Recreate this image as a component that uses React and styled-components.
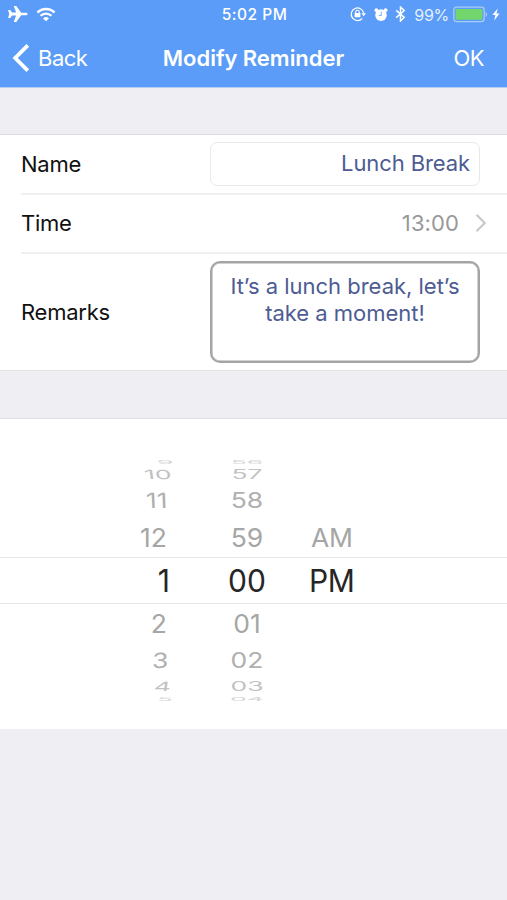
import React from 'react';
import styled, { createGlobalStyle } from 'styled-components';

const GlobalStyle = createGlobalStyle`
  * {
    box-sizing: border-box;
  }

  body {
    margin: 0;
    background: #efeef3;
    font-family: Inter, 'Liberation Sans', sans-serif;
    color: #111;
  }
`;

const Screen = styled.div`
  display: flex;
  flex-direction: column;
  width: 507px;
  height: 900px;
  overflow: hidden;
  background: #efeef3;
`;

const Header = styled.header`
  height: 88px;
  background: #5a9cf7;
  border-bottom: 1px solid #b5cdf2;
  color: #fff;
`;

const StatusBar = styled.div`
  display: grid;
  grid-template-columns: 1fr auto 1fr;
  align-items: center;
  height: 28px;
  padding: 0 7px;
`;

const StatusGroup = styled.div`
  display: flex;
  align-items: center;
  justify-content: ${({ $end }) => ($end ? 'flex-end' : 'flex-start')};
`;

const Clock = styled.span`
  padding: 1px 0 0 2px;
  font-size: 15.5px;
  font-weight: 500;
  letter-spacing: 0.5px;
`;

const Percent = styled.span`
  margin: 1px 4px 0 8px;
  font-size: 16px;
  letter-spacing: -0.3px;
  opacity: 0.85;
`;

const NavBar = styled.nav`
  display: grid;
  grid-template-columns: 1fr auto 1fr;
  align-items: center;
  height: 59px;
  padding: 0 12px;
`;

const NavButton = styled.button`
  display: flex;
  align-items: center;
  justify-self: ${({ $end }) => ($end ? 'end' : 'start')};
  gap: 8px;
  margin-right: ${({ $end }) => ($end ? 11 : 0)}px;
  padding: 0;
  border: 0;
  background: none;
  color: #fff;
  font-family: inherit;
  font-size: 22px;
  letter-spacing: -0.5px;
`;

const Title = styled.h1`
  margin: 0;
  font-size: 22px;
  font-weight: 600;
  letter-spacing: -0.03px;
`;

const Form = styled.section`
  margin-top: 46px;
  padding-left: 21px;
  background: #fff;
  border-top: 1px solid #dcdce0;
  border-bottom: 1px solid #e3e3e6;
`;

const Row = styled.div`
  display: flex;
  align-items: center;
  justify-content: space-between;
  height: ${({ $height }) => $height}px;
  padding-right: ${({ $inset }) => $inset}px;

  & + & {
    border-top: 2px solid #f0f0f1;
  }
`;

const Label = styled.span`
  padding-bottom: 1px;
  font-size: 22px;
  letter-spacing: -0.25px;
`;

const NameField = styled.div`
  width: 270px;
  height: 44px;
  padding-right: 9px;
  border: 1.5px solid #e9e9ea;
  border-radius: 7px;
  color: #4d5c93;
  font-size: 22px;
  line-height: 41px;
  letter-spacing: -0.1px;
  text-align: right;
`;

const TimeValue = styled.span`
  display: flex;
  align-items: center;
  gap: 16px;
  padding-bottom: 2px;
  color: #98989a;
  font-size: 22px;
  letter-spacing: 0.1px;
`;

const RemarksField = styled.div`
  width: 270px;
  height: 102px;
  padding: 10px 10px;
  border: 2px solid #a4a4a5;
  border-radius: 10px;
  box-shadow: inset 0 0 0 0.5px #a4a4a5;
  color: #4d5c93;
  font-size: 22px;
  line-height: 27px;
  letter-spacing: -0.01px;
  text-align: center;
`;

const Picker = styled.section`
  height: 311px;
  margin-top: 47px;
  padding-top: 41px;
  background: #fff;
  border-top: 1px solid #dfdfe3;
`;

const Wheel = styled.div`
  display: flex;
  flex-direction: column;
  height: 243px;
  overflow: hidden;
`;

const WheelRow = styled.div`
  display: grid;
  flex: none;
  grid-template-columns: 170px 154px 183px;
  align-items: center;
  height: ${({ $height }) => $height}px;
  color: ${({ $color }) => $color};
  font-size: ${({ $selected }) => ($selected ? 30 : 26.5)}px;
  line-height: 1;
  border: solid #e6e6e8;
  border-width: ${({ $selected }) => ($selected ? '1px 0' : 0)};
`;

const Cell = styled.span`
  justify-self: ${({ $align }) => $align};
  margin: -20px ${({ $right }) => $right || 0}px -20px ${({ $left }) => $left || 0}px;
  transform: ${({ $squash, $lean }) => `scaleY(${$squash}) skewX(${$lean || 0}deg)`};
  letter-spacing: ${({ $tight }) => $tight || 0}px;
`;

const wheelRows = [
  { hour: '9', minute: '56', height: 5, squash: 0.2, color: '#d6d6d6', inset: -3, lean: 4 },
  { hour: '10', minute: '57', height: 18, squash: 0.48, color: '#c2c2c2', inset: -1, lean: 4 },
  { hour: '11', minute: '58', height: 34, squash: 0.79, color: '#b0b0b0', inset: 2, lean: 2 },
  { hour: '12', minute: '59', period: 'AM', height: 40, squash: 0.98, color: '#a6a6a6', inset: 3 },
  { hour: '1', minute: '00', period: 'PM', height: 47, squash: 1.02, color: '#262626', inset: 0, selected: true },
  { hour: '2', minute: '01', height: 39, squash: 0.98, color: '#a6a6a6', inset: 3 },
  { hour: '3', minute: '02', height: 34, squash: 0.79, color: '#b0b0b0', inset: 2, lean: -2 },
  { hour: '4', minute: '03', height: 19, squash: 0.48, color: '#c2c2c2', inset: -1, lean: -4 },
  { hour: '5', minute: '04', height: 7, squash: 0.2, color: '#d6d6d6', inset: -3, lean: -4 },
];

const AirplaneIcon = () => (
  <svg width="22" height="20" viewBox="0 0 22 20" fill="#fff">
    <path d="M20.6 10c0 .8-.8 1.3-2 1.3h-4.4L9.3 18H6.8l2.3-6.5H5.1l-1.9 2.5H1.1L2.2 10l-1.1-4h2.1l1.9 2.5h4L6.8 2h2.5l4.9 6.7h4.4c1.2 0 2 .5 2 1.3z" />
  </svg>
);

const WifiIcon = styled(({ className }) => (
  <svg className={className} width="20" height="15" viewBox="0 0 20 15" fill="none" stroke="#fff">
    <path d="M1.5 5.5a12 12 0 0 1 17 0" strokeWidth="2.5" />
    <path d="M4.6 8.8a7.6 7.6 0 0 1 10.8 0" strokeWidth="2.3" />
    <path d="M10 14.3 7 11.4a4.3 4.3 0 0 1 6 0z" fill="#fff" stroke="none" />
  </svg>
))`
  margin-left: 7px;
`;

const RotationLockIcon = () => (
  <svg width="16" height="16" viewBox="0 0 16 16" fill="none" stroke="#fff">
    <path d="M12.2 12.5A6.3 6.3 0 1 1 13.7 7" strokeWidth="1.2" />
    <path d="M11.4 7.3H16l-2.3 3z" fill="#fff" stroke="none" />
    <path d="M5.7 7.4V6a1.8 1.8 0 0 1 3.6 0v1.4" strokeWidth="1.1" />
    <rect x="4.6" y="7" width="5.8" height="4.3" rx=".6" fill="#fff" stroke="none" />
  </svg>
);

const AlarmIcon = styled(({ className }) => (
  <svg className={className} width="14" height="15" viewBox="0 0 14 15" fill="#fff">
    <circle cx="7" cy="8.1" r="5.8" />
    <circle cx="2.4" cy="3.2" r="1.9" />
    <circle cx="11.6" cy="3.2" r="1.9" />
    <path d="M7.3 4.6v3.9H4.8" fill="none" stroke="#5a9cf7" strokeWidth=".8" />
  </svg>
))`
  margin-left: 8px;
`;

const BluetoothIcon = styled(({ className }) => (
  <svg className={className} width="11" height="16" viewBox="0 0 11 16" fill="none" stroke="#fff" strokeWidth="1.5">
    <path d="m1.2 4.4 8 7L5.5 15V1l3.7 3.5-8 7.1" />
  </svg>
))`
  margin-left: 7px;
`;

const BatteryIcon = () => (
  <svg width="35" height="17" viewBox="0 0 35 17">
    <rect x=".8" y="1.2" width="30.4" height="14.4" rx="2.8" fill="none" stroke="#a9cbf5" strokeWidth="1.3" />
    <rect x="2.6" y="3" width="26.8" height="10.8" rx="1" fill="#72d66c" />
    <path d="M32.6 6v4.8c2-.8 2-4 0-4.8z" fill="#a9cbf5" />
  </svg>
);

const BoltIcon = styled(({ className }) => (
  <svg className={className} width="8" height="13" viewBox="0 0 8 13" fill="#fff">
    <path d="M5.7.5.4 7.1h3L2.2 12.5l5.4-6.9H4.5z" />
  </svg>
))`
  margin-left: 4px;
`;

const BackChevron = () => (
  <svg width="18" height="30" viewBox="0 0 18 30" fill="none" stroke="#fff" strokeWidth="3.8">
    <path d="M15.8 2.4 3.2 15l12.6 12.6" />
  </svg>
);

const DisclosureChevron = () => (
  <svg width="12" height="20" viewBox="0 0 12 20" fill="none" stroke="#c9c9cc" strokeWidth="2.2">
    <path d="m1.5 1.8 8.2 8.2-8.2 8.2" />
  </svg>
);

const App = () => (
  <>
    <GlobalStyle />
    <Screen>
      <Header>
        <StatusBar>
          <StatusGroup>
            <AirplaneIcon />
            <WifiIcon />
          </StatusGroup>
          <Clock>5:02 PM</Clock>
          <StatusGroup $end>
            <RotationLockIcon />
            <AlarmIcon />
            <BluetoothIcon />
            <Percent>99%</Percent>
            <BatteryIcon />
            <BoltIcon />
          </StatusGroup>
        </StatusBar>

        <NavBar>
          <NavButton>
            <BackChevron />
            Back
          </NavButton>
          <Title>Modify Reminder</Title>
          <NavButton $end>OK</NavButton>
        </NavBar>
      </Header>

      <Form>
        <Row $height={58} $inset={27}>
          <Label>Name</Label>
          <NameField>Lunch Break</NameField>
        </Row>
        <Row $height={59} $inset={20}>
          <Label>Time</Label>
          <TimeValue>
            13:00
            <DisclosureChevron />
          </TimeValue>
        </Row>
        <Row $height={118} $inset={27}>
          <Label>Remarks</Label>
          <RemarksField>It’s a lunch break, let’s take a moment!</RemarksField>
        </Row>
      </Form>

      <Picker>
        <Wheel>
          {wheelRows.map(({ hour, minute, period, height, squash, color, inset, lean, selected }) => (
            <WheelRow key={minute} $height={height} $color={color} $selected={selected}>
              <Cell $align="end" $right={inset} $squash={squash} $lean={lean}>
                {hour}
              </Cell>
              <Cell $align="center" $squash={squash}>
                {minute}
              </Cell>
              {period && (
                <Cell $align="start" $left={selected ? -15 : -13} $squash={squash} $tight={-0.4}>
                  {period}
                </Cell>
              )}
            </WheelRow>
          ))}
        </Wheel>
      </Picker>
    </Screen>
  </>
);

export default App;
